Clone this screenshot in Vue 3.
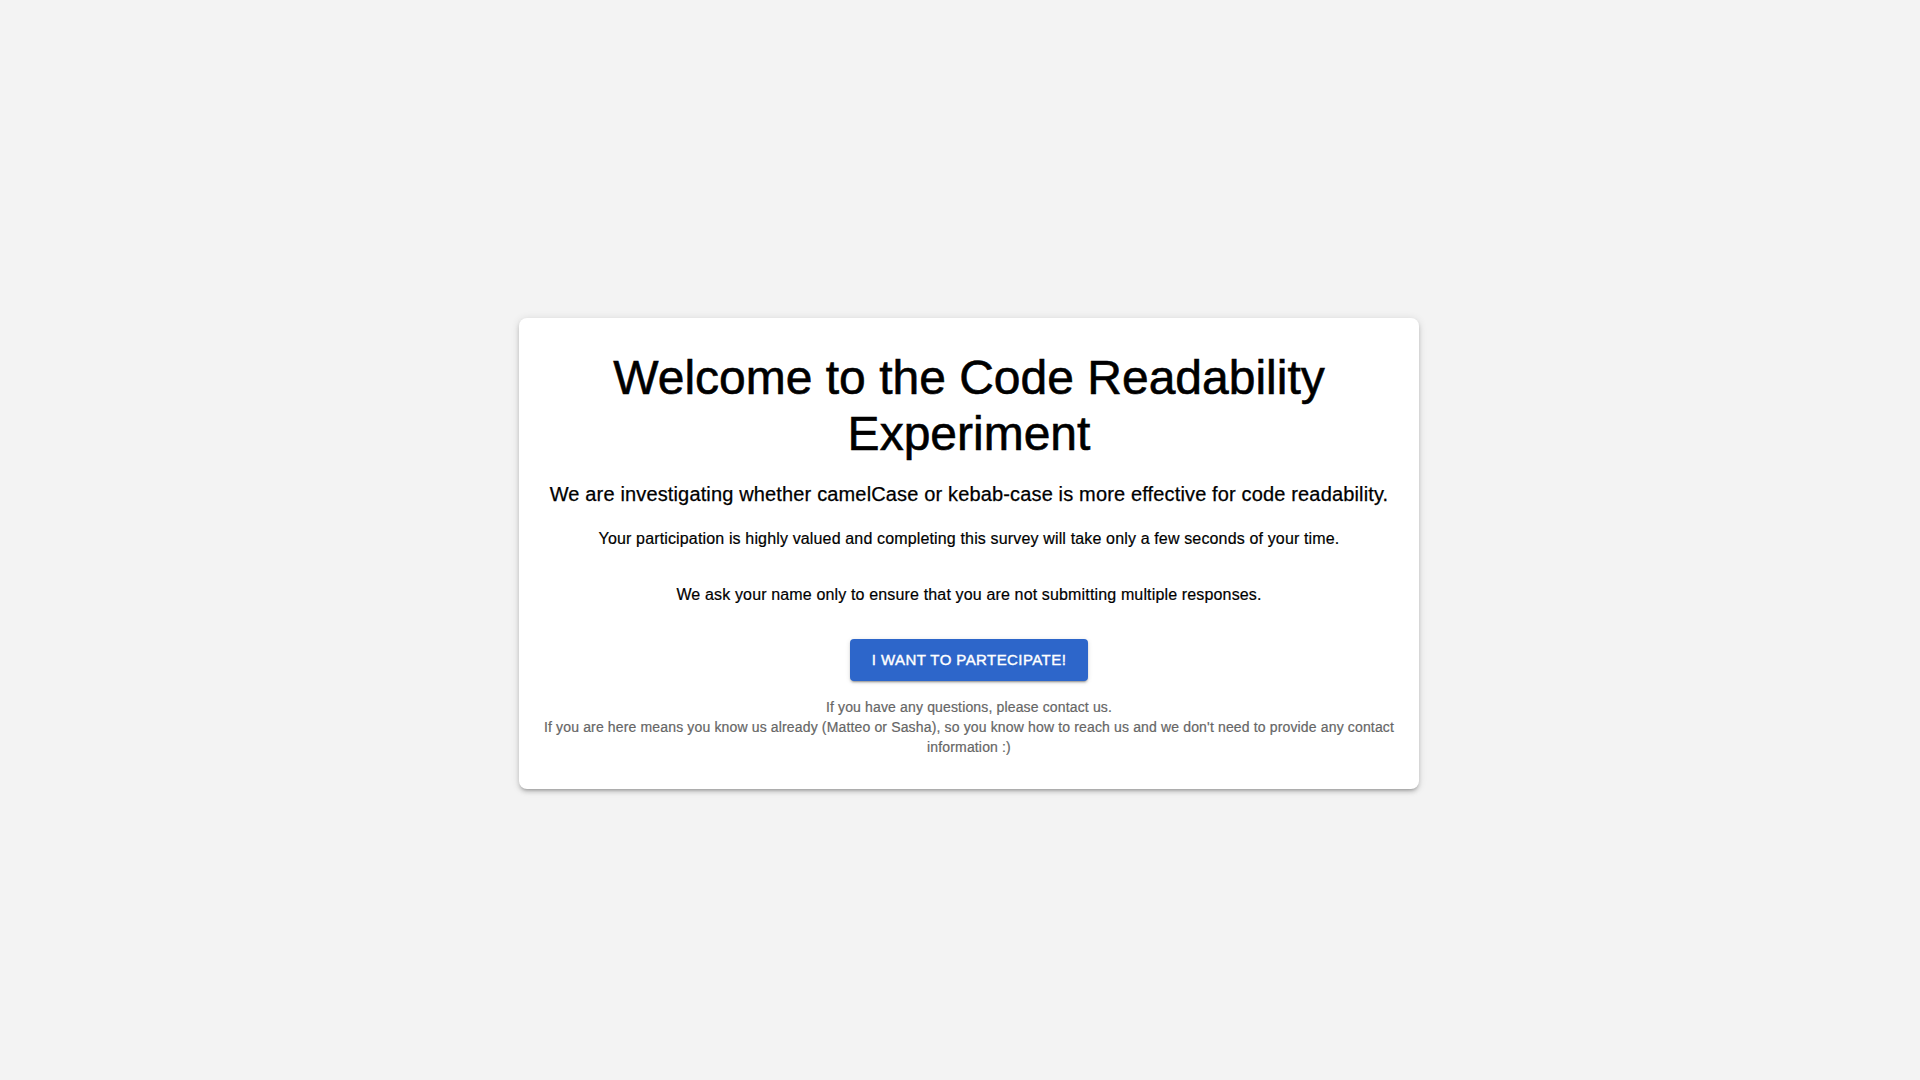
<script setup>
const notes = [
  'Your participation is highly valued and completing this survey will take only a few seconds of your time.',
  'We ask your name only to ensure that you are not submitting multiple responses.',
]
</script>

<template>
  <main class="page">
    <section class="card">
      <h1 class="title">Welcome to the Code Readability<br />Experiment</h1>
      <h2 class="subtitle">We are investigating whether camelCase or kebab-case is more effective for code readability.</h2>
      <p v-for="note in notes" :key="note" class="note">{{ note }}</p>
      <button class="start" type="button">I want to partecipate!</button>
      <p class="contact">
        If you have any questions, please contact us.<br />
        If you are here means you know us already (Matteo or Sasha), so you know how to reach us and we don't need to provide any contact<br />
        information :)
      </p>
    </section>
  </main>
</template>

<style>
body {
  background: #f3f3f3;
}
</style>

<style scoped>
.page {
  box-sizing: border-box;
  height: 100vh;
  padding: 27px 0 0 18px;
  display: flex;
  align-items: center;
  justify-content: center;
  font-family: "Liberation Sans", Helvetica, Arial, sans-serif;
  color: #000;
}

.card {
  box-sizing: border-box;
  width: 900px;
  height: 471px;
  padding: 32px 24px;
  display: flex;
  flex-direction: column;
  align-items: center;
  text-align: center;
  white-space: nowrap;
  background: #fff;
  border-radius: 8px;
  box-shadow:
    0 3px 3px -2px rgba(0, 0, 0, 0.2),
    0 3px 4px 0 rgba(0, 0, 0, 0.14),
    0 1px 8px 0 rgba(0, 0, 0, 0.12);
}

.title {
  margin: 0 0 16px;
  font-size: 48px;
  font-weight: 400;
  line-height: 56px;
  -webkit-text-stroke: 0.6px currentColor;
}

.subtitle {
  margin: 0 0 17px;
  font-size: 20px;
  font-weight: 400;
  line-height: 32px;
  letter-spacing: 0.0075em;
  -webkit-text-stroke: 0.25px currentColor;
}

.note {
  margin: 0 0 32px;
  font-size: 16px;
  line-height: 24px;
  letter-spacing: 0.00938em;
  -webkit-text-stroke: 0.2px currentColor;
}

.start {
  margin: 0 0 16px;
  box-sizing: border-box;
  width: 238px;
  height: 42px;
  padding: 0;
  border: 0;
  border-radius: 4px;
  background: #2d66ca;
  color: #fff;
  font: 500 15px/26px "Liberation Sans", Helvetica, Arial, sans-serif;
  letter-spacing: 0.02857em;
  text-transform: uppercase;
  -webkit-text-stroke: 0.4px currentColor;
  box-shadow:
    0 3px 1px -2px rgba(0, 0, 0, 0.2),
    0 2px 2px 0 rgba(0, 0, 0, 0.14),
    0 1px 5px 0 rgba(0, 0, 0, 0.12);
}

.contact {
  margin: 0;
  font-size: 14px;
  line-height: 20px;
  letter-spacing: 0.01071em;
  color: #666;
  -webkit-text-stroke: 0.2px currentColor;
}
</style>
